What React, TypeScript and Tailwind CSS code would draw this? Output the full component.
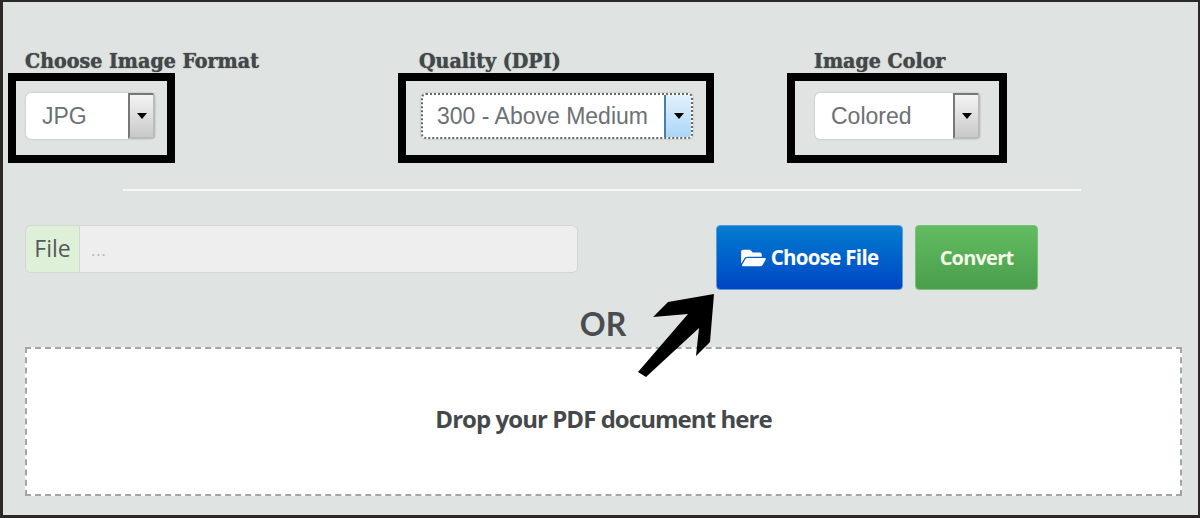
import React from 'react';
import { FaFolderOpen } from 'react-icons/fa';

const labelFont = "font-['DejaVu_Serif',serif] [font-stretch:condensed] font-bold text-[21.2px] leading-[25px] text-[#45484a] [text-shadow:0_0_1px_#45484a]";

const FakeSelect = ({ value, width, focused }: { value: string; width: string; focused?: boolean }) => (
  <div
    className={`flex h-[46px] ${width} rounded-[5px] bg-white shadow-[0_0_2px_rgba(0,0,0,0.25)] ${
      focused ? 'border-2 border-dotted border-[#666]' : ''
    }`}
  >
    <span
      className={`flex-1 self-center font-['Liberation_Sans',sans-serif] text-[23px] text-[#6d7074] ${
        focused ? 'pl-[14px]' : 'pl-[16px]'
      }`}
    >
      {value}
    </span>
    <span
      className={`flex w-[27px] items-center justify-center rounded-r-[3px] ${
        focused
          ? 'border-l-2 border-[#4a7ea8] bg-gradient-to-b from-[#e4f1fb] to-[#a9d6f8]'
          : 'border-2 border-[#777] border-r-[#bbb] border-b-[#bbb] bg-gradient-to-b from-[#f4f4f4] to-[#c9c9c9]'
      }`}
    >
      <span className="h-0 w-0 border-x-[5px] border-t-[6px] border-x-transparent border-t-black" />
    </span>
  </div>
);

const App: React.FC = () => {
  return (
    <div className="relative flex h-[518px] w-[1200px] flex-col overflow-hidden border-2 border-l-[3px] border-b-[3px] border-[#2b2826] bg-[#dfe3e2]">
      <div className="mt-[46px] flex">
        <div className="ml-[5px] w-[390px]">
          <div className={`${labelFont} ml-[17px]`}>Choose Image Format</div>
          <div className="h-[90px] w-[167px] border-8 border-black pl-[10px] pt-[12px]">
            <FakeSelect value="JPG" width="w-[129px]" />
          </div>
        </div>
        <div className="w-[389px]">
          <div className={`${labelFont} ml-[21px]`}>Quality (DPI)</div>
          <div className="h-[90px] w-[316px] border-8 border-black pl-[15px] pt-[12px]">
            <FakeSelect value="300 - Above Medium" width="w-[272px]" focused />
          </div>
        </div>
        <div>
          <div className={`${labelFont} ml-[27px]`}>Image Color</div>
          <div className="h-[90px] w-[220px] border-8 border-black pl-[20px] pt-[12px]">
            <FakeSelect value="Colored" width="w-[165px]" />
          </div>
        </div>
      </div>

      <div className="ml-[120px] mt-[26px] h-[2px] w-[958px] bg-[#f7f8f8]" />

      <div className="mt-[34px] flex items-start">
        <div className="ml-[22px] flex h-[48px] w-[553px] overflow-hidden rounded-[6px] border border-[#d2d6d5]">
          <span className="flex w-[54px] items-center justify-center border-r border-[#d4d8d4] bg-[#dff0d8] pb-[2px] font-['Open_Sans',sans-serif] text-[23px] text-[#55595c]">
            File
          </span>
          <span className="flex-1 bg-[#eeeeee] pl-[11px] pt-[12px] font-['Open_Sans',sans-serif] text-[16px] tracking-[1px] text-[#b5b5b5]">
            ...
          </span>
        </div>
        <button className="ml-[138px] flex h-[65px] w-[187px] items-center justify-center gap-[5px] rounded-[4px] border border-[#5a9ad8] bg-gradient-to-b from-[#0a7cd0] to-[#0044c4] font-['Open_Sans',sans-serif] text-[20.5px] font-bold tracking-[-0.7px] text-white">
          <FaFolderOpen className="h-[22px] w-[25px]" />
          Choose File
        </button>
        <button className="ml-[12px] h-[65px] w-[123px] rounded-[4px] border border-[#7cbf7c] bg-gradient-to-b from-[#62bc60] to-[#4a9e4c] font-['Open_Sans',sans-serif] text-[20px] font-bold tracking-[-0.8px] text-[#f4f8e8]">
          Convert
        </button>
      </div>

      <div className="mt-[16px] ml-[22px] w-[1156px] text-center font-['Lato',sans-serif] text-[32px] font-bold leading-[36px] text-[#4a4d50]">
        OR
      </div>

      <div className="ml-[22px] mt-[5px] flex h-[149px] w-[1157px] items-center justify-center border-2 border-dashed border-[#a3a5a5] bg-white pb-[6px] font-['Open_Sans',sans-serif] text-[24px] font-bold tracking-[-0.95px] text-[#45484a]">
        Drop your PDF document here
      </div>

      {/* annotation arrow over the buttons */}
      <svg className="absolute -left-[3px] -top-[2px]" width="1200" height="518" viewBox="0 0 1200 518">
        <polygon points="714,294 668,302 653,317 688,314 638,372 646,377 699,328 696,356 710,342" fill="#000" />
      </svg>
    </div>
  );
};

export default App;
